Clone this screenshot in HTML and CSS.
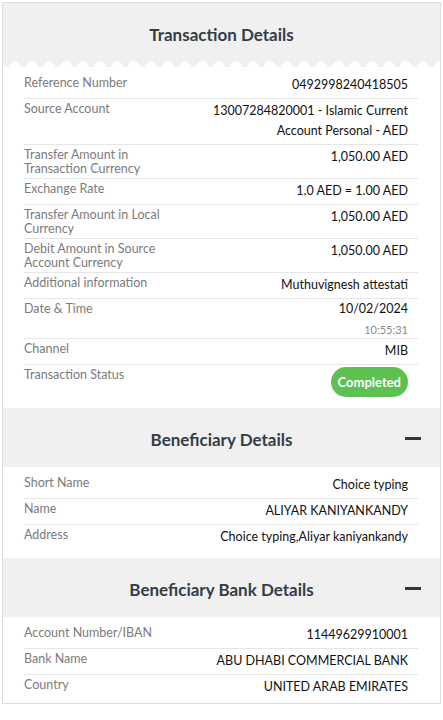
FILE: index.html
```html
<!DOCTYPE html>
<html lang="en">
<head>
<meta charset="utf-8">
<title>Transaction Details</title>
<link rel="stylesheet" href="styles.css">
</head>
<body>
<div class="card">
  <section class="section">
    <div class="head head--first"><h2>Transaction Details</h2></div>
    <div class="scallop"></div>
    <div class="rows">
      <div class="row"><div class="label">Reference Number</div><div class="value">0492998240418505</div></div>
      <div class="row"><div class="label">Source Account</div><div class="value">13007284820001 - Islamic Current Account Personal - AED</div></div>
      <div class="row"><div class="label">Transfer Amount in Transaction Currency</div><div class="value">1,050.00 AED</div></div>
      <div class="row"><div class="label">Exchange Rate</div><div class="value">1.0 AED = 1.00 AED</div></div>
      <div class="row"><div class="label">Transfer Amount in Local Currency</div><div class="value">1,050.00 AED</div></div>
      <div class="row"><div class="label">Debit Amount in Source Account Currency</div><div class="value">1,050.00 AED</div></div>
      <div class="row"><div class="label">Additional information</div><div class="value">Muthuvignesh attestati</div></div>
      <div class="row"><div class="label">Date &amp; Time</div><div class="value value--date"><div class="date">10/02/2024</div><div class="time">10:55:31</div></div></div>
      <div class="row"><div class="label">Channel</div><div class="value">MIB</div></div>
      <div class="row"><div class="label">Transaction Status</div><div class="value"><span class="badge">Completed</span></div></div>
    </div>
  </section>
  <section class="section">
    <div class="head"><h2>Beneficiary Details</h2><span class="minus"></span></div>
    <div class="rows">
      <div class="row"><div class="label">Short Name</div><div class="value">Choice typing</div></div>
      <div class="row"><div class="label">Name</div><div class="value">ALIYAR KANIYANKANDY</div></div>
      <div class="row"><div class="label">Address</div><div class="value">Choice typing,Aliyar kaniyankandy</div></div>
    </div>
  </section>
  <section class="section">
    <div class="head"><h2>Beneficiary Bank Details</h2><span class="minus"></span></div>
    <div class="rows rows--last">
      <div class="row"><div class="label">Account Number/IBAN</div><div class="value">11449629910001</div></div>
      <div class="row"><div class="label">Bank Name</div><div class="value">ABU DHABI COMMERCIAL BANK</div></div>
      <div class="row"><div class="label">Country</div><div class="value">UNITED ARAB EMIRATES</div></div>
    </div>
  </section>
</div>
</body>
</html>
```

FILE: styles.css
```css
* { box-sizing: border-box; }
body {
  margin: 2px;
  font-family: Lato, "Open Sans", sans-serif;
  background: #fff;
}
.card {
  border: 1px solid #dedede;
  background: #fff;
}
.head {
  background: #f0f0f0;
  height: 59px;
  display: grid;
  grid-template-columns: 1fr auto 1fr;
  align-items: center;
}
.head--first { height: 58px; }
.head h2 {
  grid-column: 2;
  margin: 0;
  padding-top: 3px;
  font-size: 17px;
  font-weight: 700;
  color: #333d47;
}
.head--first h2 { padding-top: 5px; }
.minus {
  grid-column: 3;
  justify-self: end;
  width: 16px;
  height: 3px;
  margin-right: 19px;
  margin-top: 1px;
  background: #2f3943;
}
.scallop {
  height: 6px;
  background: radial-gradient(circle at 50% 100%, #fff 5.5px, rgba(255,255,255,0) 6px) 3.5px 0 / 17px 6px repeat-x, #f0f0f0;
}
.rows {
  padding: 5px 22px 8px 21px;
}
.rows--last { padding-bottom: 3px; }
.row {
  display: flex;
  border-top: 1px solid #e6e6e6;
  padding: 2px 0;
}
.row:first-child { border-top-color: transparent; }
.label {
  flex: 0 0 40%;
  margin-top: 1px;
  font-size: 12.5px;
  line-height: 14px;
  color: #7b7b7b;
}
.value {
  flex: 1;
  text-align: right;
  padding-right: 10px;
  margin-bottom: 1px;
  font-size: 12.5px;
  line-height: 20px;
  color: #111;
}
.value--date { margin-bottom: 0; }
.value--date .date { line-height: 16px; }
.value--date .time {
  margin-top: 6px;
  line-height: 13px;
  font-size: 11px;
  color: #8a8a8a;
}
.badge {
  display: inline-block;
  height: 30px;
  line-height: 30px;
  padding: 0 7px;
  border-radius: 15px;
  background: #5cc150;
  color: #fff;
  font-weight: 700;
  font-size: 13px;
}
```
